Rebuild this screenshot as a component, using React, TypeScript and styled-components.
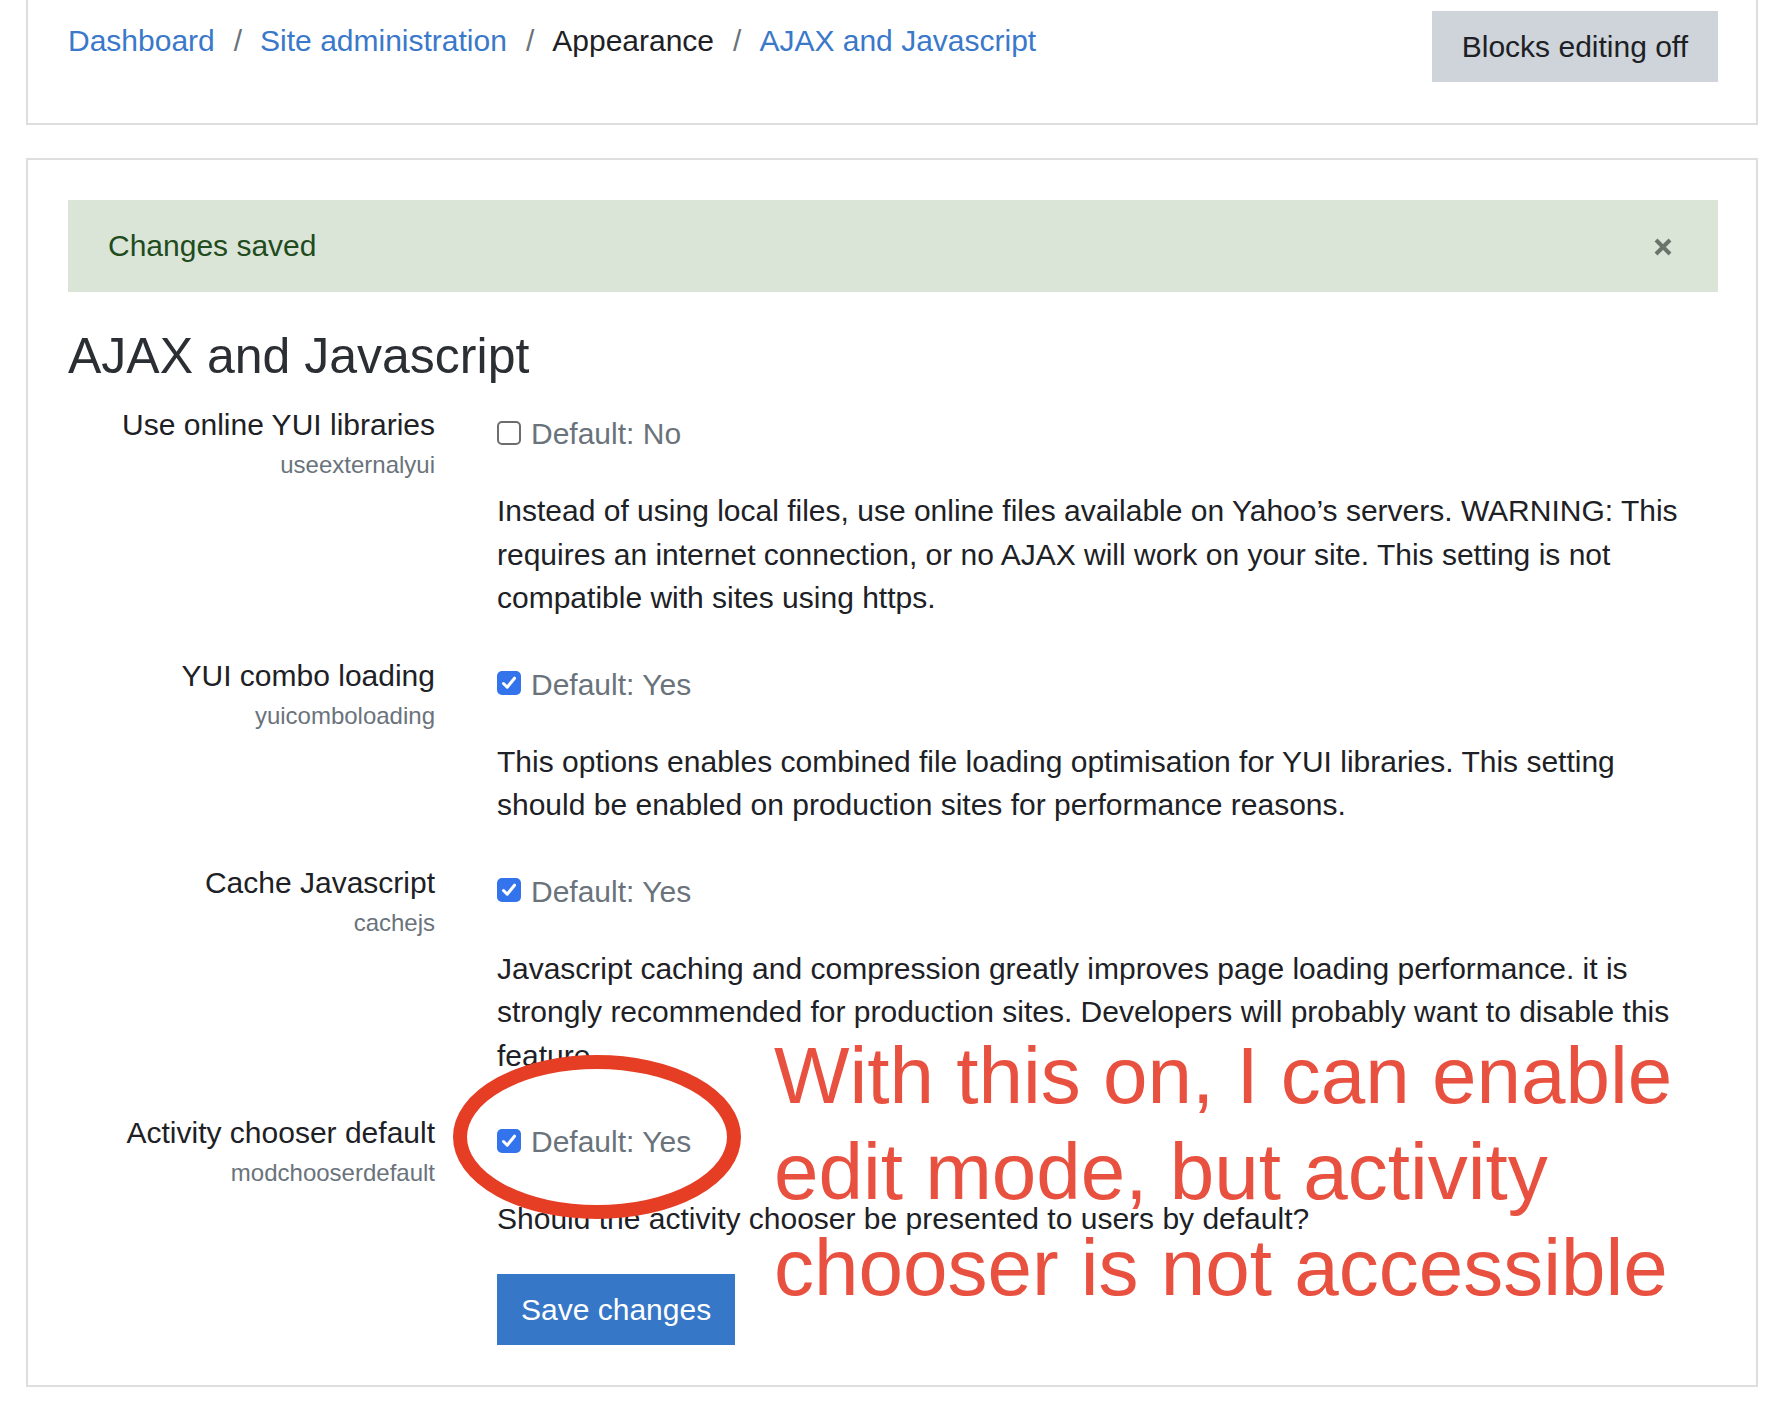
import React from 'react';
import styled, { createGlobalStyle } from 'styled-components';

const GlobalStyle = createGlobalStyle`
  html, body {
    margin: 0;
    padding: 0;
    background: #ffffff;
  }
  body {
    font-family: "Liberation Sans", Arial, sans-serif;
    color: #1d2125;
    overflow: hidden;
  }
`;

const Page = styled.div`
  position: relative;
  display: flow-root;
  padding: 0 11px 0 26px;
  width: 1769px;
  box-sizing: border-box;
`;

const Card = styled.div`
  border: 2px solid #dedede;
  background: #ffffff;
  box-sizing: border-box;
`;

const HeaderCard = styled(Card)`
  margin-top: -32px;
  padding: 41px 38px 41px 40px;
  display: flex;
  justify-content: space-between;
  align-items: flex-start;
`;

const Breadcrumb = styled.nav`
  display: flex;
  align-items: center;
  margin-top: 7px;
  font-size: 30px;
  line-height: 45px;
`;

const Crumb = styled.a<{ current?: boolean }>`
  color: ${p => (p.current ? '#1d2125' : '#3a78c9')};
  text-decoration: none;
`;

const Separator = styled.span`
  color: #6a737b;
  padding: 0 18px 0 19px;
`;

const GreyButton = styled.button`
  font-family: inherit;
  font-size: 30px;
  line-height: 45px;
  padding: 13px 30px 13px;
  border: none;
  border-radius: 0;
  background: #ced4da;
  color: #1d2125;
`;

const MainCard = styled(Card)`
  margin-top: 33px;
  padding: 40px 38px 40px 40px;
`;

const Alert = styled.div`
  display: flex;
  justify-content: space-between;
  align-items: center;
  background: #dae5d8;
  color: #1f4b1e;
  font-size: 30px;
  line-height: 45px;
  padding: 23px 40px 24px;
`;

const CloseIcon = styled.svg`
  width: 20px;
  height: 20px;
  margin-right: 5px;
  margin-top: 3px;
`;

const Heading = styled.h2`
  margin: 36px 0 17px;
  font-size: 50px;
  line-height: 57px;
  font-weight: 400;
  color: #2b2f33;
`;

const SettingRow = styled.div`
  display: grid;
  grid-template-columns: 367px 1fr;
  column-gap: 62px;
  margin-bottom: 33px;
`;

const LabelCol = styled.div`
  text-align: right;
`;

const LabelTitle = styled.div`
  font-size: 30px;
  line-height: 45px;
  color: #1d2125;
`;

const LabelKey = styled.div`
  font-size: 24px;
  line-height: 36px;
  color: #6a737b;
`;

const SettingCol = styled.div`
  padding: 9px 14px 0 0;
`;

const DefaultLine = styled.label`
  display: flex;
  align-items: center;
  gap: 10px;
  font-size: 30px;
  line-height: 45px;
  color: #6a737b;
`;

const Box = styled.span<{ checked?: boolean }>`
  width: 24px;
  height: 24px;
  box-sizing: border-box;
  border-radius: 5px;
  display: inline-flex;
  align-items: center;
  justify-content: center;
  background: ${p => (p.checked ? '#3374ec' : '#ffffff')};
  border: ${p => (p.checked ? 'none' : '2px solid #6d6d6d')};
  margin-top: -2px;
`;

const Description = styled.div`
  margin-top: 33px;
  font-size: 30px;
  line-height: 43.5px;
  color: #1d2125;
`;

const PrimaryButton = styled.button`
  font-family: inherit;
  font-size: 30px;
  line-height: 45px;
  padding: 13px 24px;
  border: none;
  border-radius: 0;
  background: #3677c8;
  color: #ffffff;
`;

const ButtonRow = styled.div`
  display: grid;
  grid-template-columns: 367px 1fr;
  column-gap: 62px;
`;

const Annotation = styled.div`
  position: absolute;
  left: 774px;
  top: 1028px;
  font-family: "Liberation Sans", Arial, sans-serif;
  font-size: 80px;
  line-height: 96px;
  color: #e8503f;
  white-space: nowrap;
`;

const Ring = styled.svg`
  position: absolute;
  left: 453px;
  top: 1055px;
  width: 288px;
  height: 164px;
  overflow: visible;
`;

const Checkbox = ({ checked }: { checked?: boolean }) => (
  <Box checked={checked}>
    {checked && (
      <svg width="18" height="18" viewBox="0 0 18 18">
        <path d="M3.5 9.5 L7.2 13.2 L14.5 4.2" fill="none" stroke="#ffffff" strokeWidth="3" strokeLinecap="round" strokeLinejoin="round" />
      </svg>
    )}
  </Box>
);

type Setting = {
  title: string;
  name: string;
  checked: boolean;
  description: string;
};

const settings: Setting[] = [
  {
    title: 'Use online YUI libraries',
    name: 'useexternalyui',
    checked: false,
    description:
      'Instead of using local files, use online files available on Yahoo\u2019s servers. WARNING: This requires an internet connection, or no AJAX will work on your site. This setting is not compatible with sites using https.',
  },
  {
    title: 'YUI combo loading',
    name: 'yuicomboloading',
    checked: true,
    description:
      'This options enables combined file loading optimisation for YUI libraries. This setting should be enabled on production sites for performance reasons.',
  },
  {
    title: 'Cache Javascript',
    name: 'cachejs',
    checked: true,
    description:
      'Javascript caching and compression greatly improves page loading performance. it is strongly recommended for production sites. Developers will probably want to disable this feature.',
  },
  {
    title: 'Activity chooser default',
    name: 'modchooserdefault',
    checked: true,
    description: 'Should the activity chooser be presented to users by default?',
  },
];

const App = () => {
  return (
    <Page>
      <GlobalStyle />
      <HeaderCard>
        <Breadcrumb>
          <Crumb href="#">Dashboard</Crumb>
          <Separator>/</Separator>
          <Crumb href="#">Site administration</Crumb>
          <Separator>/</Separator>
          <Crumb current>Appearance</Crumb>
          <Separator>/</Separator>
          <Crumb href="#">AJAX and Javascript</Crumb>
        </Breadcrumb>
        <GreyButton>Blocks editing off</GreyButton>
      </HeaderCard>

      <MainCard>
        <Alert>
          <span>Changes saved</span>
          <CloseIcon viewBox="0 0 20 20">
            <path d="M3 3 L17 17 M17 3 L3 17" stroke="#6b746b" strokeWidth="4" />
          </CloseIcon>
        </Alert>
        <Heading>AJAX and Javascript</Heading>
        {settings.map(s => (
          <SettingRow key={s.name}>
            <LabelCol>
              <LabelTitle>{s.title}</LabelTitle>
              <LabelKey>{s.name}</LabelKey>
            </LabelCol>
            <SettingCol>
              <DefaultLine>
                <Checkbox checked={s.checked} />
                <span>Default: {s.checked ? 'Yes' : 'No'}</span>
              </DefaultLine>
              <Description>{s.description}</Description>
            </SettingCol>
          </SettingRow>
        ))}
        <ButtonRow>
          <span />
          <div>
            <PrimaryButton>Save changes</PrimaryButton>
          </div>
        </ButtonRow>
      </MainCard>

      <Ring viewBox="0 0 288 164">
        <ellipse cx="144" cy="82" rx="137" ry="75" fill="none" stroke="#e63e25" strokeWidth="14" />
      </Ring>
      <Annotation>
        With this on, I can enable
        <br />
        edit mode, but activity
        <br />
        chooser is not accessible
      </Annotation>
    </Page>
  );
};

export default App;
